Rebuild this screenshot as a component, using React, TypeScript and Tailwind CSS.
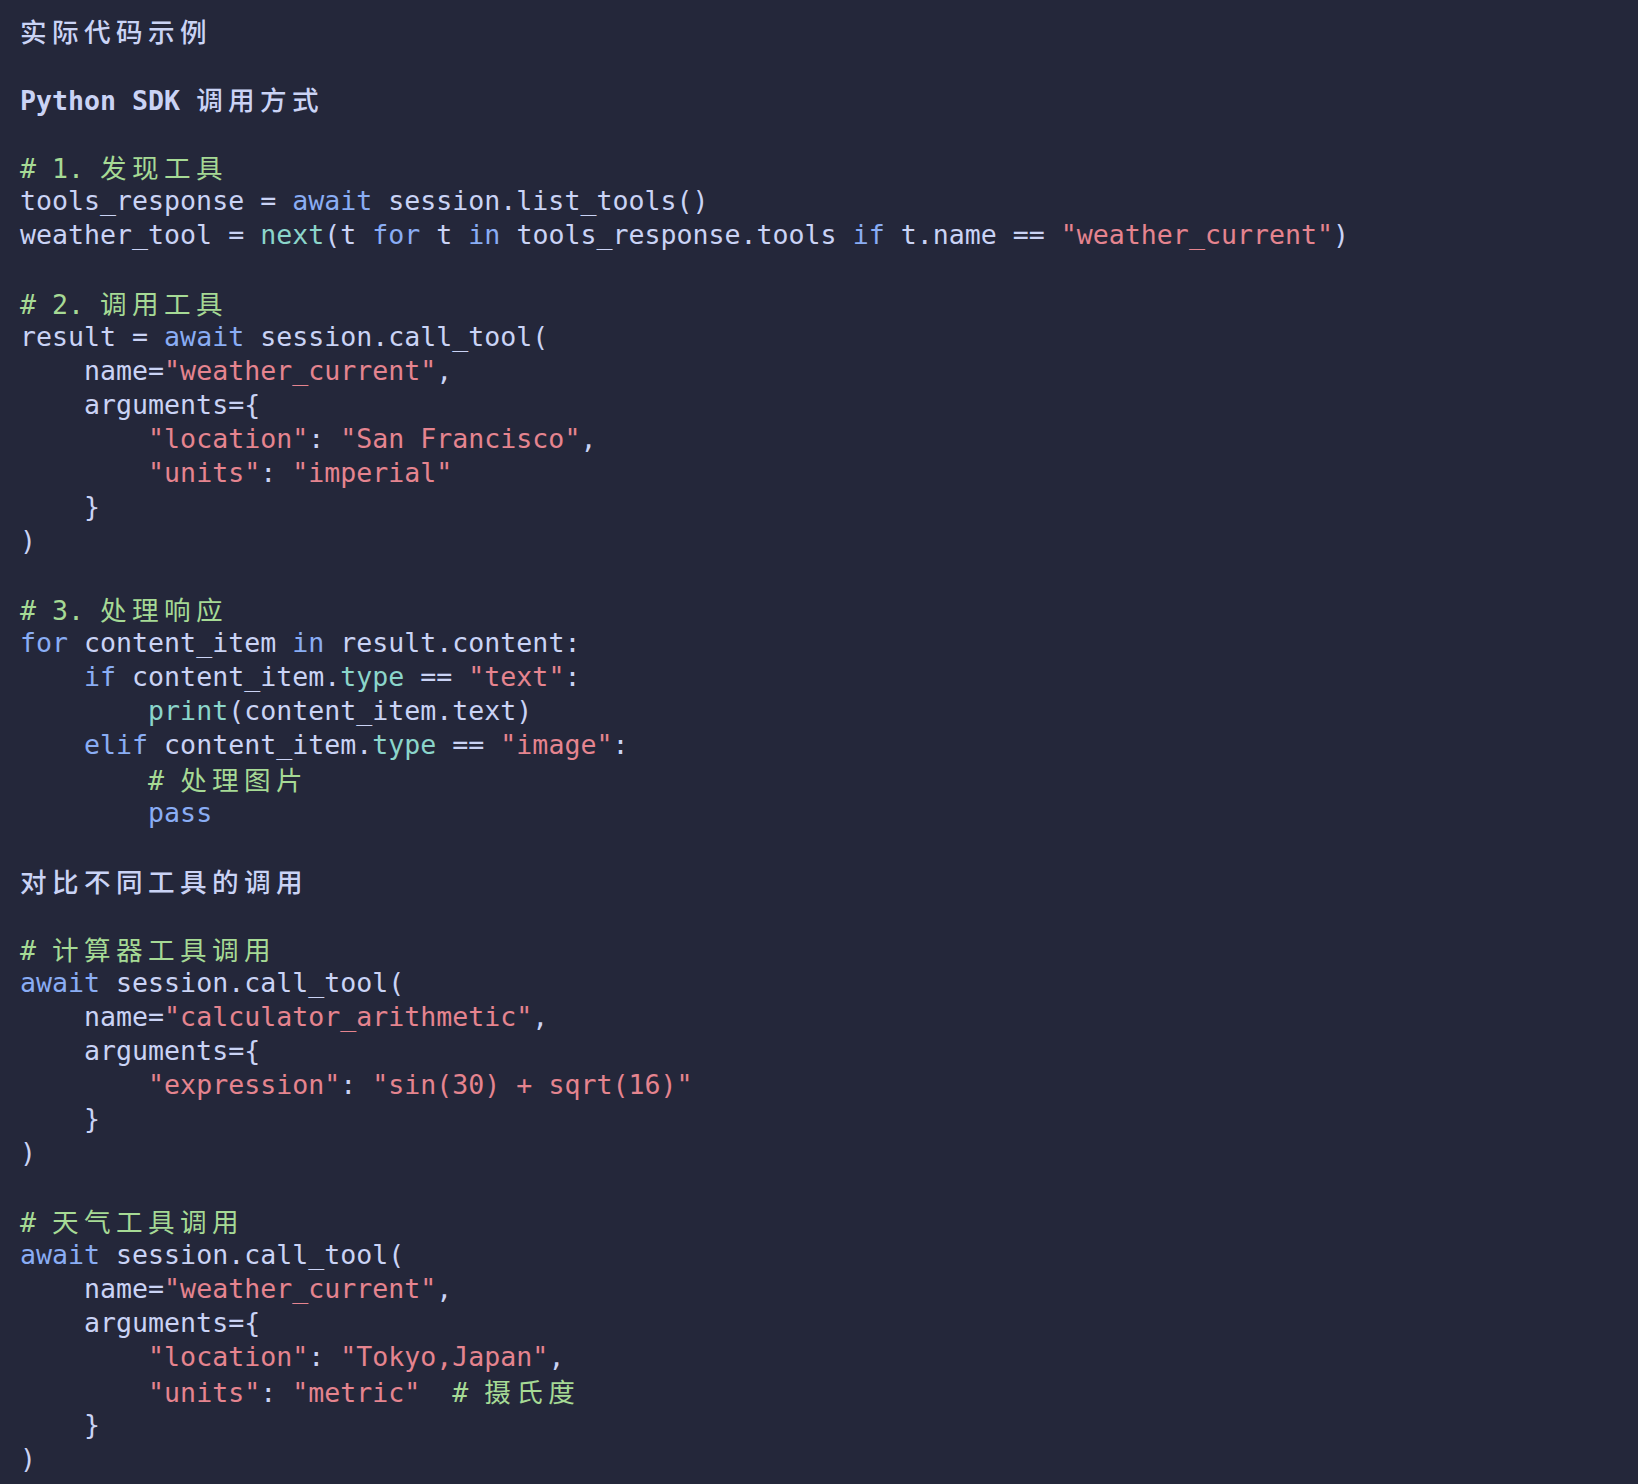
import React from 'react';

type Kind = 't' | 'k' | 's' | 'c' | 'f' | 'h';
type Seg = [Kind, string];

const colors: Record<Kind, string> = {
  t: 'text-[#cad3f5]',
  k: 'text-[#8aadf4]',
  s: 'text-[#e5848f]',
  c: 'text-[#a6da95]',
  f: 'text-[#8bd5ca]',
  h: 'text-[#cad3f5] font-bold',
};

// every line of the block, split into coloured pieces
const lines: Seg[][] = [
  [['h', '实际代码示例']],
  [],
  [['h', 'Python SDK 调用方式']],
  [],
  [['c', '# 1. 发现工具']],
  [['t', 'tools_response = '], ['k', 'await'], ['t', ' session.list_tools()']],
  [
    ['t', 'weather_tool = '],
    ['f', 'next'],
    ['t', '(t '],
    ['k', 'for'],
    ['t', ' t '],
    ['k', 'in'],
    ['t', ' tools_response.tools '],
    ['k', 'if'],
    ['t', ' t.name == '],
    ['s', '"weather_current"'],
    ['t', ')'],
  ],
  [],
  [['c', '# 2. 调用工具']],
  [['t', 'result = '], ['k', 'await'], ['t', ' session.call_tool(']],
  [['t', '    name='], ['s', '"weather_current"'], ['t', ',']],
  [['t', '    arguments={']],
  [['t', '        '], ['s', '"location"'], ['t', ': '], ['s', '"San Francisco"'], ['t', ',']],
  [['t', '        '], ['s', '"units"'], ['t', ': '], ['s', '"imperial"']],
  [['t', '    }']],
  [['t', ')']],
  [],
  [['c', '# 3. 处理响应']],
  [['k', 'for'], ['t', ' content_item '], ['k', 'in'], ['t', ' result.content:']],
  [['t', '    '], ['k', 'if'], ['t', ' content_item.'], ['f', 'type'], ['t', ' == '], ['s', '"text"'], ['t', ':']],
  [['t', '        '], ['f', 'print'], ['t', '(content_item.text)']],
  [['t', '    '], ['k', 'elif'], ['t', ' content_item.'], ['f', 'type'], ['t', ' == '], ['s', '"image"'], ['t', ':']],
  [['t', '        '], ['c', '# 处理图片']],
  [['t', '        '], ['k', 'pass']],
  [],
  [['h', '对比不同工具的调用']],
  [],
  [['c', '# 计算器工具调用']],
  [['k', 'await'], ['t', ' session.call_tool(']],
  [['t', '    name='], ['s', '"calculator_arithmetic"'], ['t', ',']],
  [['t', '    arguments={']],
  [['t', '        '], ['s', '"expression"'], ['t', ': '], ['s', '"sin(30) + sqrt(16)"']],
  [['t', '    }']],
  [['t', ')']],
  [],
  [['c', '# 天气工具调用']],
  [['k', 'await'], ['t', ' session.call_tool(']],
  [['t', '    name='], ['s', '"weather_current"'], ['t', ',']],
  [['t', '    arguments={']],
  [['t', '        '], ['s', '"location"'], ['t', ': '], ['s', '"Tokyo,Japan"'], ['t', ',']],
  [['t', '        '], ['s', '"units"'], ['t', ': '], ['s', '"metric"'], ['t', '  '], ['c', '# 摄氏度']],
  [['t', '    }']],
  [['t', ')']],
];

// CJK glyphs take two mono cells, so pad them out with tracking
const Piece = ({ text, heading }: { text: string; heading: boolean }) => {
  const parts = text.split(/([\u4e00-\u9fff]+)/);
  return (
    <>
      {parts.map((p, i) =>
        /[\u4e00-\u9fff]/.test(p) ? (
          <span
            key={i}
            className={
              heading
                ? "tracking-[5.4px] font-medium font-['Noto_Sans_CJK_SC',sans-serif]"
                : "tracking-[5.4px] font-['Noto_Sans_CJK_SC',sans-serif]"
            }
          >
            {p}
          </span>
        ) : (
          <React.Fragment key={i}>{p}</React.Fragment>
        )
      )}
    </>
  );
};

const App = () => {
  return (
    <div className="min-h-screen w-full bg-[#24273a]">
      <div className="pl-[20px] pt-[14px] pb-2 font-['DejaVu_Sans_Mono','Noto_Sans_CJK_SC',monospace] text-[26.6px] leading-[34px] whitespace-pre">
        {lines.map((line, i) => (
          <div key={i} className="h-[34px]">
            {line.map(([kind, text], j) => (
              <span key={j} className={colors[kind]}>
                <Piece text={text} heading={kind === 'h'} />
              </span>
            ))}
          </div>
        ))}
      </div>
    </div>
  );
};

export default App;
